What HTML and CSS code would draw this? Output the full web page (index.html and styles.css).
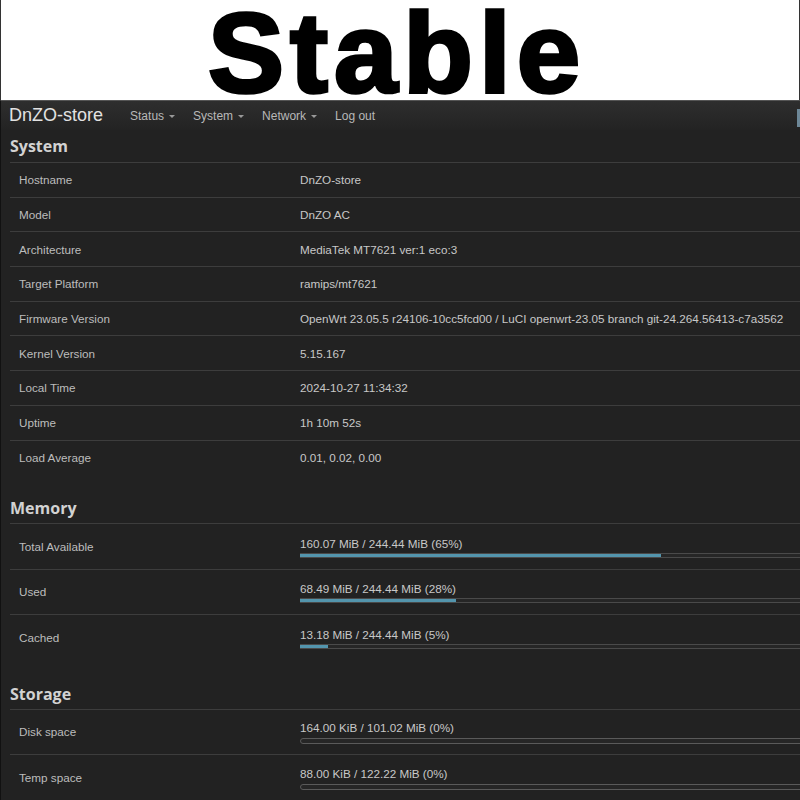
FILE: index.html
```html
<!DOCTYPE html>
<html>

<head>
    <title>DnZO-store - Overview</title>
    <link rel="stylesheet" href="styles.css">
</head>

<body>
    <div class="banner">
        <h1>Stable</h1>
    </div>

    <div class="page">
        <header class="topbar">
            <span class="brand">DnZO-store</span>
            <nav class="menu">
                <span class="menu-item dropdown">Status</span>
                <span class="menu-item dropdown">System</span>
                <span class="menu-item dropdown">Network</span>
                <span class="menu-item">Log out</span>
            </nav>
            <span class="indicator"></span>
        </header>

        <div class="section">
            <h2>System</h2>
            <div class="table">
                <div class="row">
                    <div class="label">Hostname</div>
                    <div class="value">DnZO-store</div>
                </div>
                <div class="row">
                    <div class="label">Model</div>
                    <div class="value">DnZO AC</div>
                </div>
                <div class="row">
                    <div class="label">Architecture</div>
                    <div class="value">MediaTek MT7621 ver:1 eco:3</div>
                </div>
                <div class="row">
                    <div class="label">Target Platform</div>
                    <div class="value">ramips/mt7621</div>
                </div>
                <div class="row">
                    <div class="label">Firmware Version</div>
                    <div class="value">OpenWrt 23.05.5 r24106-10cc5fcd00 / LuCI openwrt-23.05 branch git-24.264.56413-c7a3562</div>
                </div>
                <div class="row">
                    <div class="label">Kernel Version</div>
                    <div class="value">5.15.167</div>
                </div>
                <div class="row">
                    <div class="label">Local Time</div>
                    <div class="value">2024-10-27 11:34:32</div>
                </div>
                <div class="row">
                    <div class="label">Uptime</div>
                    <div class="value">1h 10m 52s</div>
                </div>
                <div class="row">
                    <div class="label">Load Average</div>
                    <div class="value">0.01, 0.02, 0.00</div>
                </div>
            </div>
        </div>

        <div class="section">
            <h2>Memory</h2>
            <div class="table">
                <div class="row tall">
                    <div class="label">Total Available</div>
                    <div class="value">
                        <div>160.07 MiB / 244.44 MiB (65%)</div>
                        <div class="bar"><div class="fill" style="width: 65%"></div></div>
                    </div>
                </div>
                <div class="row tall">
                    <div class="label">Used</div>
                    <div class="value">
                        <div>68.49 MiB / 244.44 MiB (28%)</div>
                        <div class="bar"><div class="fill" style="width: 28%"></div></div>
                    </div>
                </div>
                <div class="row tall">
                    <div class="label">Cached</div>
                    <div class="value">
                        <div>13.18 MiB / 244.44 MiB (5%)</div>
                        <div class="bar"><div class="fill" style="width: 5%"></div></div>
                    </div>
                </div>
            </div>
        </div>

        <div class="section">
            <h2>Storage</h2>
            <div class="table">
                <div class="row tall">
                    <div class="label">Disk space</div>
                    <div class="value">
                        <div>164.00 KiB / 101.02 MiB (0%)</div>
                        <div class="bar round"><div class="fill" style="width: 0%"></div></div>
                    </div>
                </div>
                <div class="row tall">
                    <div class="label">Temp space</div>
                    <div class="value">
                        <div>88.00 KiB / 122.22 MiB (0%)</div>
                        <div class="bar round"><div class="fill" style="width: 0%"></div></div>
                    </div>
                </div>
            </div>
        </div>
    </div>
</body>

</html>
```

FILE: styles.css
```css
html,
body {
    margin: 0;
    padding: 0;
    overflow: hidden;
}

body {
    font-family: "Liberation Sans", Arial, sans-serif;
    background-color: #222222;
    width: 800px;
    height: 800px;
}

.banner {
    height: 100px;
    background-color: #ffffff;
    border-left: 1px solid #333;
    border-right: 1px solid #333;
    box-sizing: border-box;
    text-align: center;
}

.banner h1 {
    margin: 0;
    padding: 6px 6px 0 0;
    font-family: "Liberation Sans", Arial, sans-serif;
    font-weight: bold;
    font-size: 114px;
    line-height: 94px;
    letter-spacing: 6px;
    color: #000;
    -webkit-text-stroke: 3.5px #000;
}

.page {
    background-color: #222222;
    border-top: 1px solid #555;
    border-left: 1px solid #111;
    height: 700px;
    overflow: hidden;
}

.topbar {
    height: 29px;
    display: flex;
    align-items: center;
    background: linear-gradient(#2e2e2e, #232323);
}

.brand {
    font-size: 18px;
    color: #e2e2e2;
    padding-left: 8px;
    margin-right: 27px;
}

.menu {
    display: flex;
    gap: 18px;
    font-size: 12px;
    line-height: 14px;
    color: #b8b8b8;
    padding-top: 1px;
}

.dropdown::after {
    content: "";
    display: inline-block;
    vertical-align: middle;
    margin-left: 5px;
    border-left: 3px solid transparent;
    border-right: 3px solid transparent;
    border-top: 3px solid #999;
}

.indicator {
    margin-left: auto;
    width: 3px;
    height: 18px;
    margin-top: 4px;
    background-color: #6d8797;
}

.section h2 {
    margin: 0;
    padding-left: 9px;
    font-family: "Open Sans", sans-serif;
    font-weight: bold;
    font-size: 16px;
    color: #d2d2d2;
}

.section:first-of-type h2 {
    line-height: 32px;
}

.table {
    margin-left: 9px;
    width: 900px;
}

.row {
    display: flex;
    box-sizing: border-box;
    height: 34.7px;
    border-top: 1px solid #3d3d3d;
    align-items: center;
    font-size: 11.7px;
    color: #bdbdbd;
}

.label {
    width: 281px;
    padding-left: 9px;
    flex-shrink: 0;
}

.value {
    color: #c8c8c8;
}

.section + .section h2 {
    padding-top: 20px;
    line-height: 29px;
}

.row.tall {
    height: 45.5px;
}

.row.tall .value {
    width: 556px;
    padding-top: 2px;
}

.bar {
    margin-top: 3px;
    height: 5px;
    background-color: #262626;
    border-top: 1px solid #4a4a4a;
    border-bottom: 1px solid #4a4a4a;
    box-sizing: border-box;
}

.fill {
    height: 100%;
    background-color: #5395ad;
}

.bar.round {
    height: 6px;
    border: 1px solid #5a5a5a;
    border-radius: 3px;
    margin-top: 4px;
}
```
